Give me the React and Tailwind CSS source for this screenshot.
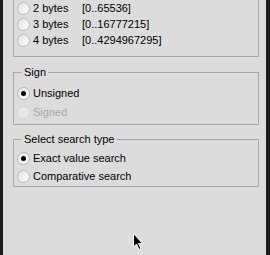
const font = { fontFamily: '"Liberation Sans", Arial, sans-serif' }

const Radio = ({ checked, disabled }) => (
  <span
    className={`flex h-[13px] w-[13px] shrink-0 items-center justify-center rounded-full border ${
      disabled ? 'border-[#d4d4d4] bg-[#e8e8e8]' : 'border-[#b4b4b4] bg-gradient-to-br from-[#e4e4e4] to-white'
    }`}
  >
    {checked && <span className="h-[5px] w-[5px] rounded-full bg-black" />}
  </span>
)

const Row = ({ label, range, checked, disabled, h = 'h-4' }) => (
  <div className={`flex ${h} items-center whitespace-nowrap pl-[3px]`}>
    <Radio checked={checked} disabled={disabled} />
    <span className={`ml-[3px] ${range ? 'w-[49px]' : ''} ${disabled ? 'text-[#a8a8a8]' : 'text-black'}`}>{label}</span>
    {range && <span className="text-black">{range}</span>}
  </div>
)

const Group = ({ title, className, children }) => (
  <div className={`relative ml-[10px] mr-[7px] border border-[#a6a6a6] ${className}`}>
    {title && (
      <span className="absolute left-[8px] top-[-8px] bg-[#dcdcdc] px-[2px] leading-[14px] text-black">{title}</span>
    )}
    {children}
  </div>
)

export default function App() {
  return (
    <div className="flex h-[255px] w-[270px] overflow-hidden bg-[#1c1c1c] text-[11px]" style={font}>
      <div className="relative ml-[3px] mr-[4px] flex-1 overflow-hidden bg-[#dcdcdc]">
        <Group className="-mt-[10px] pt-[9px] pb-[8px]">
          <Row label="2 bytes" range="[0..65536]" />
          <Row label="3 bytes" range="[0..16777215]" />
          <Row label="4 bytes" range="[0..4294967295]" />
        </Group>
        <Group title="Sign" className="mt-[15px] pt-[11px] pb-[3px]">
          <Row label="Unsigned" checked h="h-[18px]" />
          <div className="h-px" />
          <Row label="Signed" disabled h="h-[18px]" />
        </Group>
        <Group title="Select search type" className="mt-[14px] pt-[9px] pb-[1px]">
          <Row label="Exact value search" checked h="h-[18px]" />
          <Row label="Comparative search" h="h-[18px]" />
        </Group>
        <svg className="absolute left-[130px] top-[233px]" width="11" height="18" viewBox="0 0 11 18">
          <path d="M0.5 0.5 V14 L3.5 11 L6 16.5 L8 15.5 L5.5 10.5 H9.5 Z" fill="black" stroke="white" strokeWidth="1" />
        </svg>
      </div>
    </div>
  )
}
